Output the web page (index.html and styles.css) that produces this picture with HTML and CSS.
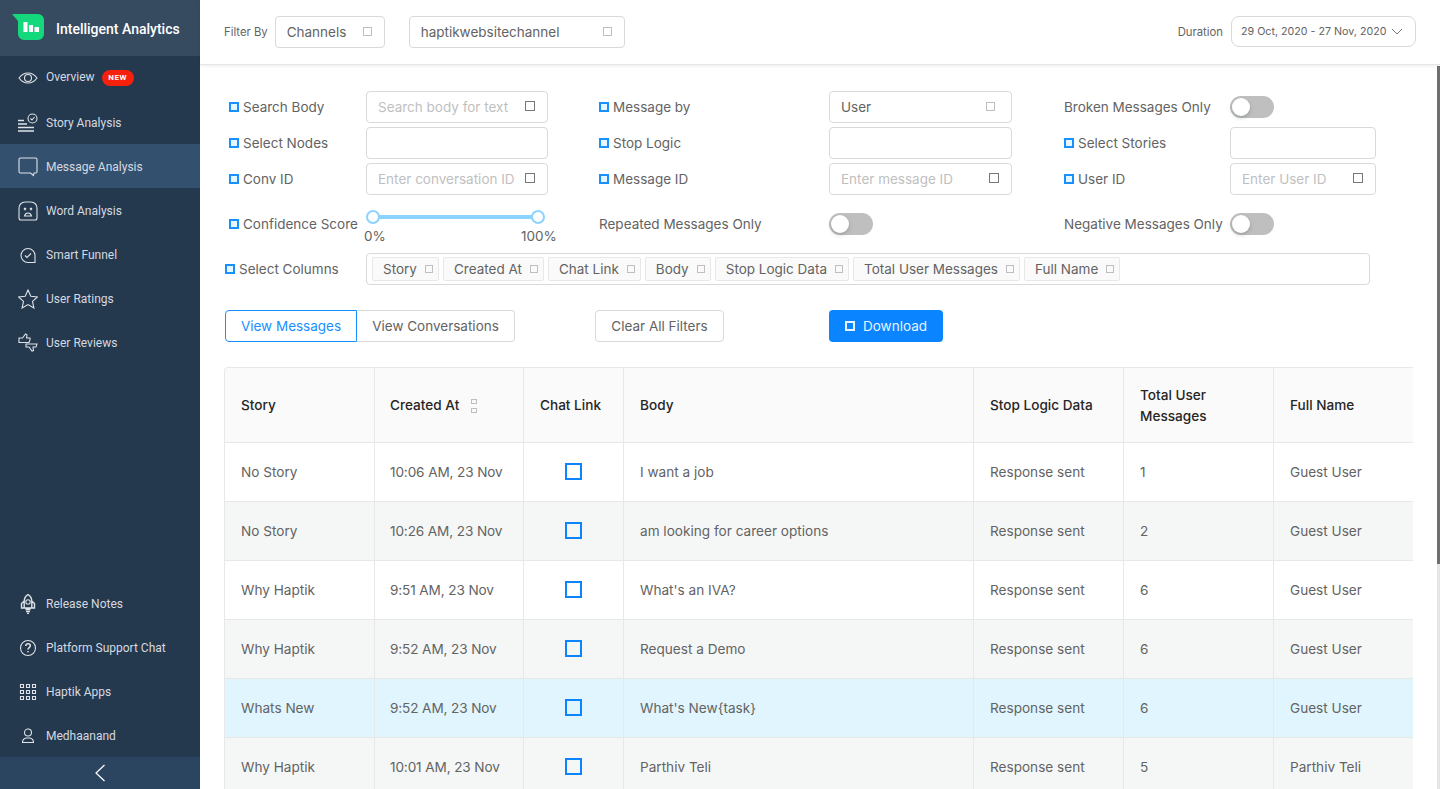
FILE: index.html
```html
<!DOCTYPE html>
<html lang="en">
<head>
  <meta charset="UTF-8">
  <meta name="viewport" content="width=device-width, initial-scale=1.0">
  <title>Message Analysis</title>
  <link rel="stylesheet" href="styles.css">
</head>
<body>
  <!-- Sidebar -->
  <aside class="sidebar">
    <div class="brand">
      <svg class="brand-logo" viewBox="0 0 32 26"><path d="M0 0H26a6 6 0 0 1 6 6V20a6 6 0 0 1-6 6H12a6 6 0 0 1-6-6V7Z" fill="#14d97c"/><path d="M11.500 8h4v10h-4zM17 11h4v7h-4zM22.500 13h4.500v5h-4.500z" fill="#fff"/></svg>
      <span>Intelligent Analytics</span>
    </div>
    <nav class="nav-main">
      <a class="nav-item nav-item-first">
        <svg class="nav-icon" viewBox="0 0 20 20"><path d="M1 10C3.500 6.500 6.500 5 10 5s6.500 1.500 9 5c-2.500 3.500-5.500 5-9 5s-6.500-1.500-9-5Z"/><circle cx="10" cy="10" r="3.500"/></svg>
        <span>Overview</span><b class="badge-new">NEW</b>
      </a>
      <a class="nav-item">
        <svg class="nav-icon" viewBox="0 0 20 20"><path d="M0 7.500h6M0 11h9M0 14.500h16M0 18h16" stroke-width="1.500"/><circle cx="14.500" cy="5.500" r="4.500"/><path d="M12.500 5.500l1.500 1.500 2.500-3"/></svg>
        <span>Story Analysis</span>
      </a>
      <a class="nav-item nav-item-active">
        <svg class="nav-icon" viewBox="0 0 20 20"><path d="M2.500 1h15A1.500 1.500 0 0 1 19 2.500v12a1.500 1.500 0 0 1-1.500 1.500H16l-.5 2.500L12.500 16H2.500A1.500 1.500 0 0 1 1 14.500V2.500A1.500 1.500 0 0 1 2.500 1Z"/></svg>
        <span>Message Analysis</span>
      </a>
      <a class="nav-item">
        <svg class="nav-icon" viewBox="0 0 20 20"><path d="M7 1h6a6 6 0 0 1 6 6v10a2 2 0 0 1-2 2H3a2 2 0 0 1-2-2V7a6 6 0 0 1 6-6Z"/><path d="M6 7l2 2M8 7l-2 2M12 7l2 2M14 7l-2 2M6.500 15c.5-2 1.800-3 3.500-3s3 1 3.500 3Z"/></svg>
        <span>Word Analysis</span>
      </a>
      <a class="nav-item">
        <svg class="nav-icon" viewBox="0 0 20 20"><path d="M10 3.500a7 7 0 1 0 0 14h7v-7a7 7 0 0 0-7-7Z"/><path d="M7 10.500l2 2 4-4"/></svg>
        <span>Smart Funnel</span>
      </a>
      <a class="nav-item">
        <svg class="nav-icon" viewBox="0 0 20 20"><path d="M10 1l2.800 6.200 6.700.7-5 4.500 1.400 6.600L10 15.600 4.100 19l1.400-6.600-5-4.500 6.700-.7Z"/></svg>
        <span>User Ratings</span>
      </a>
      <a class="nav-item">
        <svg class="nav-icon" viewBox="0 0 20 20"><path d="M1 5h3.500l3-4 1.500 1-.5 3h3.500v2l-1 2.500H1ZM8 11h11l-1 3h-3l.5 3.500-1.500.5-3-4H8Z"/></svg>
        <span>User Reviews</span>
      </a>
    </nav>
    <nav class="nav-bottom">
      <a class="nav-item">
        <svg class="nav-icon" viewBox="0 0 20 20"><path d="M10 .5c2.500 1.500 3.800 4 3.800 7v6.500H6.200V7.500C6.200 4.500 7.500 2 10 .5ZM6.200 7L3.500 9.500V14h2.700M13.800 7l2.700 2.500V14h-2.700M7.500 15.500h5M8 17.500h4M9 19.500h2" stroke-width="1.400"/><circle cx="10" cy="8" r="2.200"/></svg>
        <span>Release Notes</span>
      </a>
      <a class="nav-item">
        <svg class="nav-icon" viewBox="0 0 20 20"><circle cx="10" cy="10" r="7.500"/><path d="M7.800 8c0-1.300 1-2.200 2.300-2.200s2.200.9 2.200 2c0 1.800-2.300 1.700-2.300 3.600M10 13v1.200" stroke-width="1.500"/></svg>
        <span>Platform Support Chat</span>
      </a>
      <a class="nav-item">
        <svg class="nav-icon" viewBox="0 0 20 20"><path d="M2.500 2.500h3v3h-3zM8.500 2.500h3v3h-3zM14.500 2.500h3v3h-3zM2.500 8.500h3v3h-3zM8.500 8.500h3v3h-3zM14.500 8.500h3v3h-3zM2.500 14.500h3v3h-3zM8.500 14.500h3v3h-3zM14.500 14.500h3v3h-3z"/></svg>
        <span>Haptik Apps</span>
      </a>
      <a class="nav-item">
        <svg class="nav-icon" viewBox="0 0 20 20"><circle cx="10" cy="6.500" r="3.500"/><path d="M4.500 16.500c0-3 1.800-4 3.500-4.500h4c1.700.5 3.500 1.500 3.500 4.500Z"/></svg>
        <span>Medhaanand</span>
      </a>
    </nav>
    <div class="collapse-bar">
      <svg viewBox="0 0 12 18" width="12" height="18"><path d="M10.500 1L2 9l8.500 8" fill="none" stroke="#fff" stroke-width="1.200"/></svg>
    </div>
  </aside>

  <div class="main">
    <!-- Top bar -->
    <header class="topbar">
      <span class="topbar-label">Filter By</span>
      <div class="select select-channel">Channels<i class="sq sq-small"></i></div>
      <div class="select select-name">haptikwebsitechannel<i class="sq sq-small"></i></div>
      <span class="topbar-label topbar-duration">Duration</span>
      <div class="date-box">29 Oct, 2020 - 27 Nov, 2020
        <svg viewBox="0 0 12 7" width="12" height="7"><path d="M1 1l5 5 5-5" fill="none" stroke="#777" stroke-width="1"/></svg>
      </div>
    </header>

    <div class="content">
      <!-- Filters -->
      <div class="filters">
        <div class="filter-row">
          <label class="filter-label"><i class="sq-blue"></i>Search Body</label>
          <div class="field placeholder">Search body for text<i class="sq sq-grey"></i></div>
          <label class="filter-label col-2"><i class="sq-blue"></i>Message by</label>
          <div class="field">User<i class="sq sq-small"></i></div>
          <label class="filter-label col-3">Broken Messages Only</label>
          <div class="toggle"><i></i></div>
        </div>
        <div class="filter-row">
          <label class="filter-label"><i class="sq-blue"></i>Select Nodes</label>
          <div class="field"></div>
          <label class="filter-label col-2"><i class="sq-blue"></i>Stop Logic</label>
          <div class="field"></div>
          <label class="filter-label col-3"><i class="sq-blue"></i>Select Stories</label>
          <div class="field"></div>
        </div>
        <div class="filter-row">
          <label class="filter-label"><i class="sq-blue"></i>Conv ID</label>
          <div class="field placeholder">Enter conversation ID<i class="sq sq-grey"></i></div>
          <label class="filter-label col-2"><i class="sq-blue"></i>Message ID</label>
          <div class="field placeholder">Enter message ID<i class="sq sq-grey"></i></div>
          <label class="filter-label col-3"><i class="sq-blue"></i>User ID</label>
          <div class="field placeholder">Enter User ID<i class="sq sq-grey"></i></div>
        </div>
        <div class="filter-row filter-row-slider">
          <label class="filter-label"><i class="sq-blue"></i>Confidence Score</label>
          <div class="slider">
            <div class="slider-track"></div>
            <i class="slider-handle slider-handle-min"></i>
            <i class="slider-handle slider-handle-max"></i>
            <span class="slider-mark slider-mark-min">0%</span>
            <span class="slider-mark slider-mark-max">100%</span>
          </div>
          <label class="filter-label col-2">Repeated Messages Only</label>
          <div class="toggle"><i></i></div>
          <label class="filter-label col-3">Negative Messages Only</label>
          <div class="toggle"><i></i></div>
        </div>
        <div class="columns-row">
          <label class="filter-label"><i class="sq-blue"></i>Select Columns</label>
          <div class="tags">
            <span class="tag">Story<i class="sq sq-small"></i></span>
            <span class="tag">Created At<i class="sq sq-small"></i></span>
            <span class="tag">Chat Link<i class="sq sq-small"></i></span>
            <span class="tag">Body<i class="sq sq-small"></i></span>
            <span class="tag">Stop Logic Data<i class="sq sq-small"></i></span>
            <span class="tag">Total User Messages<i class="sq sq-small"></i></span>
            <span class="tag">Full Name<i class="sq sq-small"></i></span>
          </div>
        </div>
      </div>

      <!-- Actions -->
      <div class="actions">
        <div class="btn-group">
          <button class="btn btn-on">View Messages</button>
          <button class="btn btn-off">View Conversations</button>
        </div>
        <button class="btn btn-clear">Clear All Filters</button>
        <button class="btn btn-primary"><i class="sq-white"></i>Download</button>
      </div>

      <!-- Table -->
      <div class="table-wrap">
        <table>
          <colgroup>
            <col class="w-story"><col class="w-created"><col class="w-chat"><col class="w-body"><col class="w-std"><col class="w-std"><col class="w-std">
          </colgroup>
          <thead>
            <tr>
              <th>Story</th>
              <th><div class="th-sort">Created At<span class="sorter"><i></i><i></i></span></div></th>
              <th>Chat Link</th>
              <th>Body</th>
              <th>Stop Logic Data</th>
              <th>Total User Messages</th>
              <th>Full Name</th>
            </tr>
          </thead>
          <tbody>
            <tr><td>No Story</td><td>10:06 AM, 23 Nov</td><td><i class="chat-link"></i></td><td>I want a job</td><td>Response sent</td><td>1</td><td>Guest User</td></tr>
            <tr class="alt"><td>No Story</td><td>10:26 AM, 23 Nov</td><td><i class="chat-link"></i></td><td>am looking for career options</td><td>Response sent</td><td>2</td><td>Guest User</td></tr>
            <tr><td>Why Haptik</td><td>9:51 AM, 23 Nov</td><td><i class="chat-link"></i></td><td>What's an IVA?</td><td>Response sent</td><td>6</td><td>Guest User</td></tr>
            <tr class="alt"><td>Why Haptik</td><td>9:52 AM, 23 Nov</td><td><i class="chat-link"></i></td><td>Request a Demo</td><td>Response sent</td><td>6</td><td>Guest User</td></tr>
            <tr class="hl"><td>Whats New</td><td>9:52 AM, 23 Nov</td><td><i class="chat-link"></i></td><td>What's New{task}</td><td>Response sent</td><td>6</td><td>Guest User</td></tr>
            <tr class="alt"><td>Why Haptik</td><td>10:01 AM, 23 Nov</td><td><i class="chat-link"></i></td><td>Parthiv Teli</td><td>Response sent</td><td>5</td><td>Parthiv Teli</td></tr>
          </tbody>
        </table>
      </div>
    </div>

    <!-- Scrollbar of the content pane -->
    <div class="scroll-rail"><div class="scroll-thumb"></div></div>
  </div>
</body>
</html>
```
FILE: styles.css
```css
* {
  box-sizing: border-box;
}
body {
  margin: 0;
  height: 789px;
  overflow: hidden;
  display: flex;
  font-family: Inter, "Liberation Sans", sans-serif;
  font-size: 13.5px;
  color: #636363;
  background: #fff;
}
i {
  display: block;
  flex: none;
}

/* sidebar */
.sidebar {
  width: 200px;
  flex: none;
  display: flex;
  flex-direction: column;
  background: #24384e;
  font-family: Roboto, sans-serif;
  font-size: 12px;
  color: #d5dae0;
}
.brand {
  height: 56px;
  display: flex;
  align-items: center;
  padding: 2px 0 0 12px;
  background: #374b60;
  color: #fff;
  font-size: 14px;
  font-weight: 500;
}
.brand-logo {
  width: 32px;
  height: 26px;
  margin: -4px 12px 0 0;
}
.nav-main {
  flex: 1;
}
.nav-item {
  height: 44px;
  display: flex;
  align-items: center;
  padding: 2px 0 0 18px;
}
.nav-item-first {
  padding: 0 0 0 18px;
}
.nav-item-first span {
  margin-bottom: 2px;
}
.nav-item-active {
  background: #34506f;
}
.nav-icon {
  width: 20px;
  height: 20px;
  margin-right: 8px;
  flex: none;
  fill: none;
  stroke: #dfe3e7;
  stroke-width: 1.100;
}
.badge-new {
  margin-left: 7px;
  width: 32px;
  height: 16px;
  border-radius: 8px;
  background: #f5210d;
  color: #fff;
  font-size: 8px;
  font-weight: 700;
  letter-spacing: .6px;
  text-align: center;
  line-height: 15px;
}
.collapse-bar {
  height: 32px;
  display: flex;
  align-items: center;
  justify-content: center;
  background: #2b4561;
}

/* main */
.main {
  flex: 1;
  min-width: 0;
  display: flex;
  flex-direction: column;
  position: relative;
}
.topbar {
  height: 65px;
  flex: none;
  display: flex;
  align-items: center;
  padding: 0 24px 1px 24px;
  border-bottom: 1px solid #e6e6e6;
  box-shadow: 0 1px 3px rgba(0, 0, 0, .08);
  position: relative;
  z-index: 1;
}
.topbar-label {
  font-size: 11.3px;
  margin-right: 7px;
  white-space: nowrap;
}
.topbar-duration {
  margin-right: 8px;
  margin-left: auto;
}
.select {
  height: 32px;
  display: flex;
  align-items: center;
  justify-content: space-between;
  padding: 0 12px 0 11px;
  border: 1px solid #d9d9d9;
  border-radius: 4px;
}
.select-channel {
  width: 110px;
  margin-right: 24px;
}
.select-name {
  width: 216px;
}
.date-box {
  width: 185px;
  height: 31px;
  display: flex;
  align-items: center;
  justify-content: space-between;
  padding: 0 12px 0 9px;
  border: 1px solid #d9d9d9;
  border-radius: 8px;
  font-size: 10.7px;
  white-space: nowrap;
}
.content {
  flex: 1;
  overflow: hidden;
  padding: 26px 24px 0 25px;
}
.scroll-rail {
  position: absolute;
  top: 66px;
  right: 0;
  bottom: 0;
  width: 3px;
  background: #e6e6e6;
}
.scroll-thumb {
  height: 498px;
  background: #6f6f6f;
}

/* placeholder squares */
.sq {
  border: 1px solid #bfbfbf;
}
.sq-small {
  width: 9px;
  height: 9px;
}
.sq-grey {
  width: 10px;
  height: 10px;
  border-color: #777;
  position: absolute;
  right: 12px;
  top: 9px;
}
.sq-blue {
  width: 10px;
  height: 10px;
  margin-right: 4px;
  border: 2px solid #1890ff;
  background: #e6f7ff;
}
.sq-white {
  width: 10px;
  height: 10px;
  border: 2px solid #e8f3ff;
  margin-right: 8px;
}

/* filters */
.filters {
  display: flex;
  flex-direction: column;
  gap: 4px;
}
.filter-row {
  display: grid;
  grid-template-columns: 137px 182px 51px 230px 183px 52px 166px 146px;
  height: 32px;
  margin-left: 4px;
  align-items: center;
}
.filter-row-slider {
  height: 50px;
}
.filter-label {
  display: flex;
  align-items: center;
  white-space: nowrap;
  padding-bottom: 1px;
}
.col-2 {
  grid-column: 4;
}
.col-3 {
  grid-column: 7;
}
.field {
  height: 32px;
  position: relative;
  display: flex;
  align-items: center;
  justify-content: space-between;
  padding: 0 16px 1px 11px;
  border: 1px solid #d9d9d9;
  border-radius: 4px;
  white-space: nowrap;
}
.placeholder {
  color: #bfbfbf;
}
.toggle {
  width: 44px;
  height: 22px;
  padding: 2px;
  border-radius: 11px;
  background: #bfbfbf;
}
.toggle i {
  width: 18px;
  height: 18px;
  border-radius: 50%;
  background: #fff;
  box-shadow: 0 2px 4px rgba(0, 35, 11, .2);
}
.slider {
  grid-column: 2;
  height: 50px;
  position: relative;
}
.slider-track {
  position: absolute;
  left: 7px;
  right: 10px;
  top: 16px;
  height: 4px;
  background: #8cd3ff;
}
.slider-handle {
  position: absolute;
  top: 11px;
  width: 14px;
  height: 14px;
  border: 2px solid #8cd3ff;
  border-radius: 50%;
  background: #fff;
}
.slider-handle-min {
  left: 0;
}
.slider-handle-max {
  left: 165px;
}
.slider-mark {
  position: absolute;
  top: 29px;
  line-height: 17px;
}
.slider-mark-min {
  left: -2px;
}
.slider-mark-max {
  left: 155px;
}
.columns-row {
  display: flex;
  align-items: center;
  height: 32px;
}
.columns-row .filter-label {
  width: 141px;
}
.tags {
  width: 1004px;
  height: 32px;
  display: flex;
  align-items: center;
  gap: 4px;
  padding-left: 5px;
  border: 1px solid #d9d9d9;
  border-radius: 4px;
}
.tag {
  height: 24px;
  display: flex;
  align-items: center;
  gap: 8px;
  padding: 0 5px 1px 10px;
  border: 1px solid #e8e8e8;
  border-radius: 2px;
  background: #fafafa;
  white-space: nowrap;
}
.tag .sq {
  width: 8px;
  height: 8px;
}

/* actions */
.actions {
  display: flex;
  margin-top: 25px;
}
.btn-group {
  display: flex;
  margin-right: 80px;
}
.btn {
  height: 32px;
  padding: 0 0 1px;
  border: 1px solid #d9d9d9;
  background: #fff;
  font: inherit;
  color: #636363;
  white-space: nowrap;
}
.btn-on {
  width: 132px;
  border-color: #1890ff;
  border-radius: 4px 0 0 4px;
  color: #1890ff;
}
.btn-off {
  width: 158px;
  border-left: 0;
  border-radius: 0 4px 4px 0;
}
.btn-clear {
  width: 129px;
  border-radius: 4px;
  margin-right: 105px;
}
.btn-primary {
  width: 114px;
  display: flex;
  align-items: center;
  justify-content: center;
  border: 0;
  border-radius: 4px;
  background: #0b84ff;
  color: #e8f3ff;
}

/* table */
.table-wrap {
  width: 1189px;
  margin: 25px 0 0 -1px;
  overflow: hidden;
  border-left: 1px solid #e8e8e8;
  border-top: 1px solid #e8e8e8;
  border-radius: 4px 0 0 0;
}
table {
  width: 1199px;
  table-layout: fixed;
  border-collapse: separate;
  border-spacing: 0;
}
.w-story {
  width: 150px;
}
.w-created {
  width: 149px;
}
.w-chat {
  width: 100px;
}
.w-body {
  width: 350px;
}
.w-std {
  width: 150px;
}
th, td {
  padding: 0 10px 1px 16px;
  text-align: left;
  white-space: nowrap;
  border-right: 1px solid #e8e8e8;
  border-bottom: 1px solid #e8e8e8;
}
th {
  height: 75px;
  padding-top: 1px;
  padding-bottom: 0;
  background: #fafafa;
  color: #262626;
  font-size: 13.6px;
  font-weight: 500;
  line-height: 21px;
}
th:nth-child(2), td:nth-child(2) {
  padding-left: 15px;
}
td {
  height: 59px;
  font-size: 13.6px;
}
td:nth-child(2) {
  letter-spacing: -.12px;
}
th:nth-child(6) {
  white-space: normal;
  padding-right: 30px;
}
.alt td {
  background: #f5f7f7;
}
.hl td {
  background: #e0f5fd;
}
.th-sort {
  display: flex;
  align-items: center;
}
.sorter {
  display: flex;
  flex-direction: column;
  gap: 4px;
  margin-left: 12px;
}
.sorter i {
  width: 6px;
  height: 5px;
  border: 1px solid #bfbfbf;
}
.chat-link {
  width: 17px;
  height: 17px;
  margin-left: 25px;
  border: 2px solid #0b84ff;
}
```
